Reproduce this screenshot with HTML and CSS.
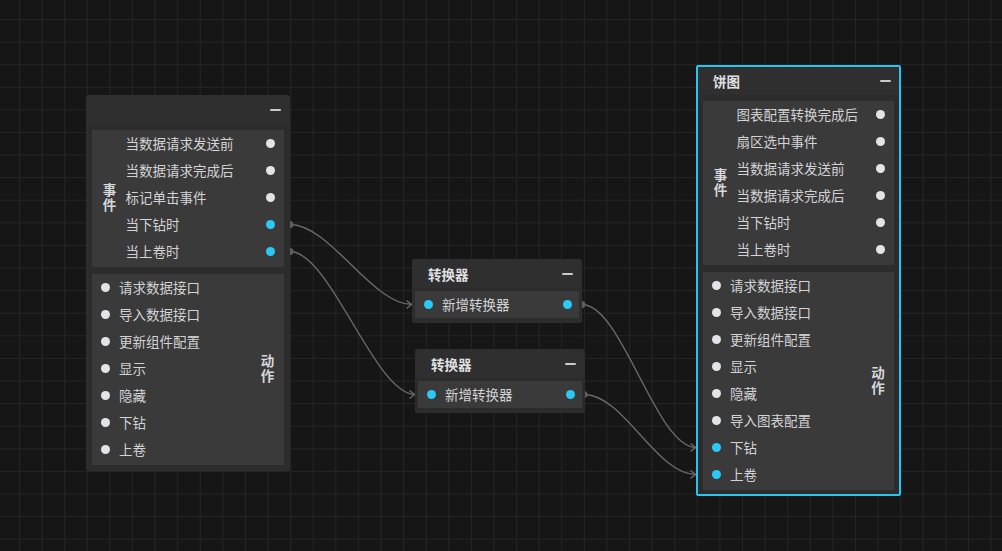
FILE: index.html
```html
<!DOCTYPE html>
<html lang="zh">
<head>
<meta charset="utf-8">
<title>Flow</title>
<link rel="stylesheet" href="styles.css">
</head>
<body>
<div class="canvas">
  <svg class="edges" width="1002" height="551" viewBox="0 0 1002 551">
    <g fill="none" stroke="#6a6a6a" stroke-width="1.4">
      <path d="M290 224.5 C330 224.5 372 304.5 412 304.5"/>
      <path d="M406.5 300.5 L411.5 304.5 L406.5 308.5"/>
      <path d="M290 251.5 C330 251.5 375 394.5 415 394.5"/>
      <path d="M409.5 390.5 L414.5 394.5 L409.5 398.5"/>
      <path d="M582 304.5 C622 304.5 656 447.5 696 447.5"/>
      <path d="M690.5 443.5 L695.5 447.5 L690.5 451.5"/>
      <path d="M584 394.5 C624 394.5 656 474.5 696 474.5"/>
      <path d="M690.5 470.5 L695.5 474.5 L690.5 478.5"/>
    </g>
    <g fill="#5e5e5e">
      <circle cx="290" cy="224.5" r="3.5"/>
      <circle cx="290" cy="251.5" r="3.5"/>
      <circle cx="582" cy="304.5" r="3.5"/>
      <circle cx="584" cy="394.5" r="3.5"/>
    </g>
  </svg>

  <div class="node node-src">
    <div class="node-head"><span class="title"></span><span class="minus"></span></div>
    <div class="node-body">
      <div class="sec">
        <div class="sec-label"><span class="vtext">事件</span></div>
        <div class="rows rows-event">
          <div class="row"><span>当数据请求发送前</span><i class="dot"></i></div>
          <div class="row"><span>当数据请求完成后</span><i class="dot"></i></div>
          <div class="row"><span>标记单击事件</span><i class="dot"></i></div>
          <div class="row"><span>当下钻时</span><i class="dot on"></i></div>
          <div class="row"><span>当上卷时</span><i class="dot on"></i></div>
        </div>
      </div>
      <div class="sec">
        <div class="rows rows-act">
          <div class="row"><i class="dot"></i><span>请求数据接口</span></div>
          <div class="row"><i class="dot"></i><span>导入数据接口</span></div>
          <div class="row"><i class="dot"></i><span>更新组件配置</span></div>
          <div class="row"><i class="dot"></i><span>显示</span></div>
          <div class="row"><i class="dot"></i><span>隐藏</span></div>
          <div class="row"><i class="dot"></i><span>下钻</span></div>
          <div class="row"><i class="dot"></i><span>上卷</span></div>
        </div>
        <div class="sec-label sec-label-right"><span class="vtext">动作</span></div>
      </div>
    </div>
  </div>

  <div class="node node-conv conv-a">
    <div class="node-head"><span class="title">转换器</span><span class="minus"></span></div>
    <div class="node-body">
      <div class="sec">
        <div class="row row-conv"><i class="dot on"></i><span class="conv-text">新增转换器</span><i class="dot on"></i></div>
      </div>
    </div>
  </div>

  <div class="node node-conv conv-b">
    <div class="node-head"><span class="title">转换器</span><span class="minus"></span></div>
    <div class="node-body">
      <div class="sec">
        <div class="row row-conv"><i class="dot on"></i><span class="conv-text">新增转换器</span><i class="dot on"></i></div>
      </div>
    </div>
  </div>

  <div class="node node-pie">
    <div class="node-head"><span class="title">饼图</span><span class="minus"></span></div>
    <div class="node-body">
      <div class="sec">
        <div class="sec-label"><span class="vtext">事件</span></div>
        <div class="rows rows-event">
          <div class="row"><span>图表配置转换完成后</span><i class="dot"></i></div>
          <div class="row"><span>扇区选中事件</span><i class="dot"></i></div>
          <div class="row"><span>当数据请求发送前</span><i class="dot"></i></div>
          <div class="row"><span>当数据请求完成后</span><i class="dot"></i></div>
          <div class="row"><span>当下钻时</span><i class="dot"></i></div>
          <div class="row"><span>当上卷时</span><i class="dot"></i></div>
        </div>
      </div>
      <div class="sec">
        <div class="rows rows-act">
          <div class="row"><i class="dot"></i><span>请求数据接口</span></div>
          <div class="row"><i class="dot"></i><span>导入数据接口</span></div>
          <div class="row"><i class="dot"></i><span>更新组件配置</span></div>
          <div class="row"><i class="dot"></i><span>显示</span></div>
          <div class="row"><i class="dot"></i><span>隐藏</span></div>
          <div class="row"><i class="dot"></i><span>导入图表配置</span></div>
          <div class="row"><i class="dot on"></i><span>下钻</span></div>
          <div class="row"><i class="dot on"></i><span>上卷</span></div>
        </div>
        <div class="sec-label sec-label-right"><span class="vtext">动作</span></div>
      </div>
    </div>
  </div>
</div>
</body>
</html>
```

FILE: styles.css
```css
html, body {
  margin: 0;
  padding: 0;
  background: #161616;
}

body {
  font-family: "Noto Sans CJK SC", "Noto Sans", sans-serif;
  font-size: 13.5px;
  color: #d3d3d6;
}

.canvas {
  position: relative;
  width: 1002px;
  height: 551px;
  overflow: hidden;
  background-color: #161616;
  background-image:
    linear-gradient(#252525 1px, transparent 1px),
    linear-gradient(90deg, #252525 1px, transparent 1px);
  background-size: 22.6px 22.6px;
  background-position: 19px 19px;
}

.edges {
  position: absolute;
  left: 0;
  top: 0;
  z-index: 0;
}

.node {
  position: absolute;
  z-index: 1;
  box-sizing: border-box;
  background: #2c2c2c;
  border: 1px solid #2e2e2e;
  border-radius: 2px;
}

.node-head {
  height: 28px;
  display: flex;
  align-items: center;
  justify-content: space-between;
  padding: 0 8px 0 15px;
  background: #2f2f2f;
}

.title {
  font-weight: bold;
  color: #e0e0e3;
  line-height: 28px;
}

.minus {
  width: 11px;
  height: 2px;
  border-radius: 1px;
  background: #c9c9cf;
  margin-left: auto;
}

.node-body {
  display: flex;
  flex-direction: column;
  gap: 7px;
  padding: 6px 5px 5px;
}

.sec {
  display: flex;
  background: #3a3a3a;
  padding-bottom: 2px;
}

.sec-label {
  flex: none;
  width: 13.5px;
  margin-left: 10px;
  display: flex;
  align-items: center;
  justify-content: center;
  font-weight: bold;
  color: #d8d8dc;
}

.vtext {
  writing-mode: vertical-rl;
  letter-spacing: 1.5px;
  line-height: 13.5px;
  margin-bottom: -1.5px;
}

.sec-label-right {
  margin-left: 0;
  margin-right: 10.5px;
}

.rows {
  flex: 1;
  display: flex;
  flex-direction: column;
}

.rows-event {
  padding-left: 10px;
}

.row {
  height: 27px;
  display: flex;
  align-items: center;
  white-space: nowrap;
  line-height: 26px;
}

.row span {
  padding-bottom: 1px;
}

.rows-event .row {
  justify-content: space-between;
  padding-right: 9.5px;
}

.rows-act .row {
  padding-left: 9px;
  gap: 9px;
}

.dot {
  flex: none;
  width: 9px;
  height: 9px;
  border-radius: 50%;
  background: #e4e4e8;
}

.dot.on {
  background: #2bc9f7;
}

/* Source node */
.node-src {
  left: 86px;
  top: 95px;
  width: 204px;
}

/* Converter nodes */
.node-conv {
  width: 170px;
}

.node-conv .node-body {
  padding: 3px 2px 4px;
}

.node-conv .sec {
  padding-bottom: 0;
}

.row-conv {
  flex: 1;
  padding: 0 7px 0 9px;
  gap: 9px;
}

.conv-text {
  flex: 1;
}

.conv-a {
  left: 412px;
  top: 259px;
}

.conv-b {
  left: 415px;
  top: 349px;
}

/* Pie node (selected) */
.node-pie {
  left: 696px;
  top: 65px;
  width: 205px;
  border: 2px solid #2ac4f0;
}

.node-pie .node-body {
  padding: 6px 5px 4px;
}

.node-pie .rows-event .row {
  padding-right: 9px;
}

.node-pie .rows-act .row {
  padding-left: 8.5px;
  gap: 9.5px;
}

.node-pie .sec-label-right {
  margin-right: 10px;
}
```
